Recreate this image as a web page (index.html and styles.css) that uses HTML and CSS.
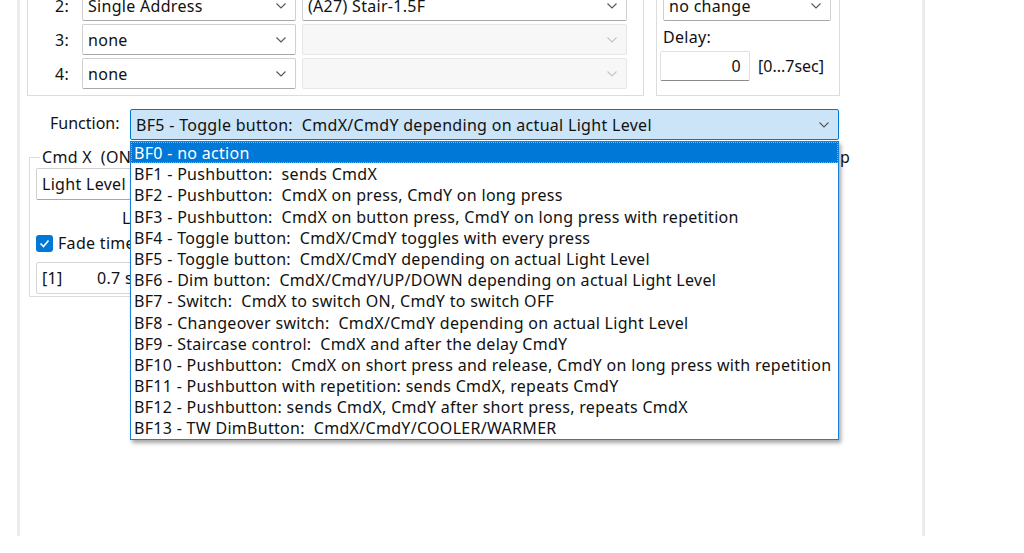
FILE: index.html
```html
<!DOCTYPE html>
<html lang="en">
<head>
  <meta charset="UTF-8" />
  <title>Button Function</title>
  <link rel="stylesheet" href="styles.css">
</head>
<body>
  <div class="window">
    <div class="top">
      <div class="group addr-group">
        <div class="addr-row">
          <span class="row-no">2:</span>
          <div class="combo combo-type"><span>Single Address</span><svg class="chev" width="10" height="6" viewBox="0 0 10 6"><path d="M0.5 0.5 L5 5 L9.5 0.5" /></svg></div>
          <div class="combo combo-target"><span>(A27) Stair-1.5F</span><svg class="chev" width="10" height="6" viewBox="0 0 10 6"><path d="M0.5 0.5 L5 5 L9.5 0.5" /></svg></div>
        </div>
        <div class="addr-row">
          <span class="row-no">3:</span>
          <div class="combo combo-type"><span>none</span><svg class="chev" width="10" height="6" viewBox="0 0 10 6"><path d="M0.5 0.5 L5 5 L9.5 0.5" /></svg></div>
          <div class="combo combo-target disabled"><span></span><svg class="chev" width="10" height="6" viewBox="0 0 10 6"><path d="M0.5 0.5 L5 5 L9.5 0.5" /></svg></div>
        </div>
        <div class="addr-row">
          <span class="row-no">4:</span>
          <div class="combo combo-type"><span>none</span><svg class="chev" width="10" height="6" viewBox="0 0 10 6"><path d="M0.5 0.5 L5 5 L9.5 0.5" /></svg></div>
          <div class="combo combo-target disabled"><span></span><svg class="chev" width="10" height="6" viewBox="0 0 10 6"><path d="M0.5 0.5 L5 5 L9.5 0.5" /></svg></div>
        </div>
      </div>

      <div class="group opt-group">
        <div class="combo combo-opt"><span>no change</span><svg class="chev" width="10" height="6" viewBox="0 0 10 6"><path d="M0.5 0.5 L5 5 L9.5 0.5" /></svg></div>
        <div class="delay-label">Delay:</div>
        <div class="delay-row">
          <div class="num-input">0</div>
          <span class="range">[0...7sec]</span>
        </div>
      </div>
    </div>

    <div class="function-row">
      <span class="function-label">Function:</span>
      <div class="function-select">
        <div class="combo combo-active"><span>BF5 - Toggle button:  CmdX/CmdY depending on actual Light Level</span><svg class="chev" width="10" height="6" viewBox="0 0 10 6"><path d="M0.5 0.5 L5 5 L9.5 0.5" /></svg></div>
        <ul class="dropdown">
          <li class="selected">BF0 - no action</li>
          <li>BF1 - Pushbutton:  sends CmdX</li>
          <li>BF2 - Pushbutton:  CmdX on press, CmdY on long press</li>
          <li>BF3 - Pushbutton:  CmdX on button press, CmdY on long press with repetition</li>
          <li>BF4 - Toggle button:  CmdX/CmdY toggles with every press</li>
          <li>BF5 - Toggle button:  CmdX/CmdY depending on actual Light Level</li>
          <li>BF6 - Dim button:  CmdX/CmdY/UP/DOWN depending on actual Light Level</li>
          <li>BF7 - Switch:  CmdX to switch ON, CmdY to switch OFF</li>
          <li>BF8 - Changeover switch:  CmdX/CmdY depending on actual Light Level</li>
          <li>BF9 - Staircase control:  CmdX and after the delay CmdY</li>
          <li>BF10 - Pushbutton:  CmdX on short press and release, CmdY on long press with repetition</li>
          <li>BF11 - Pushbutton with repetition: sends CmdX, repeats CmdY</li>
          <li>BF12 - Pushbutton: sends CmdX, CmdY after short press, repeats CmdX</li>
          <li>BF13 - TW DimButton:  CmdX/CmdY/COOLER/WARMER</li>
        </ul>
      </div>
    </div>

    <div class="mid">
      <fieldset class="cmd-group cmd-x">
        <legend>Cmd X  (ON / Dim Up)</legend>
        <div class="combo combo-level"><span>Light Level</span><svg class="chev" width="10" height="6" viewBox="0 0 10 6"><path d="M0.5 0.5 L5 5 L9.5 0.5" /></svg></div>
        <div class="level-label">Level:</div>
        <label class="check-row">
          <span class="checkbox"><svg width="13" height="13" viewBox="0 0 13 13"><path d="M2.5 6.5 L5.5 9.5 L10.5 3.5" /></svg></span>
          <span>Fade time</span>
        </label>
        <div class="fade-box"><span class="fade-idx">[1]</span><span>0.7 sec</span></div>
      </fieldset>
      <fieldset class="cmd-group cmd-y">
        <legend>Cmd Y  (OFF / Dim Down)</legend>
      </fieldset>
      <span class="side-label">Up</span>
    </div>
  </div>
</body>
</html>
```

FILE: styles.css
```css
* { box-sizing: border-box; }

body {
  margin: 0;
  background: #fff;
  font-family: 'Noto Sans', 'Noto Sans CJK KR', sans-serif;
  font-size: 16px;
  letter-spacing: 0.3px;
  color: #111;
  overflow: hidden;
}

.window {
  margin-left: 17px;
  width: 908px;
  height: 100vh;
  border-left: 3px solid #ebebeb;
  border-right: 3px solid #ebebeb;
}

/* top groups */
.top {
  display: flex;
  gap: 12px;
  margin-top: -17px;
  margin-left: 7px;
}

.group {
  border: 1px solid #dcdcdc;
}

.addr-group {
  width: 617px;
  padding: 6px 16px 5px 0;
}

.addr-row {
  display: flex;
  align-items: center;
  gap: 6px;
  margin-bottom: 3px;
}

.addr-row:last-child { margin-bottom: 0; }

.row-no {
  width: 48px;
  padding-right: 7px;
  text-align: right;
}

.combo {
  display: flex;
  align-items: center;
  justify-content: space-between;
  height: 31px;
  padding: 0 9px 0 5px;
  background: #fff;
  border: 1px solid #d0d0d0;
  border-bottom-color: #a8a8a8;
  border-radius: 2px;
  white-space: pre;
}

.chev { flex: none; }
.chev path { fill: none; stroke: #555; stroke-width: 1.1; }

.combo-type { width: 214px; }
.combo-target { width: 325px; }

.combo.disabled {
  background: #f7f7f7;
  border-color: #e6e6e6;
}
.combo.disabled .chev path { stroke: #c4c4c4; }

.opt-group {
  width: 184px;
  padding: 6px 7px 14px 6px;
}

.combo-opt { width: 168px; }

.delay-label {
  margin-top: 6px;
  line-height: 20px;
}

.delay-row {
  display: flex;
  align-items: center;
  gap: 8px;
  margin-top: 4px;
  margin-left: -3px;
}

.num-input {
  width: 90px;
  height: 30px;
  padding: 3px 8px 0 0;
  text-align: right;
  border: 1px solid #e0e0e0;
  border-bottom-color: #8a8a8a;
  border-radius: 2px;
}

.range { letter-spacing: 0; }

/* function select */
.function-row {
  display: flex;
  align-items: center;
  margin: 13px 0 0 30px;
}

.function-label {
  width: 80px;
  margin-top: -4px;
  letter-spacing: 0;
}

.function-select {
  position: relative;
  width: 709px;
}

.combo-active {
  background: #cce4f7;
  border: 1px solid #0078d7;
}

.dropdown {
  position: absolute;
  top: calc(100% + 1px);
  left: 0;
  width: 709px;
  margin: 0;
  padding: 0;
  list-style: none;
  background: #fff;
  border: 1px solid #1a7fd8;
  box-shadow: 2px 3px 4px rgba(0, 0, 0, 0.35);
  z-index: 2;
}

.dropdown li {
  height: 21.2px;
  line-height: 22px;
  padding-left: 3px;
  white-space: pre;
}

.dropdown li.selected {
  background: #0078d7;
  color: #fff;
  outline: 1px dotted #e8a040;
  outline-offset: -1px;
}

/* lower groups */
.mid {
  display: flex;
  align-items: flex-start;
  margin-top: 7px;
}

.cmd-group {
  margin: 0;
  padding: 0 6px 2px;
  border: 1px solid #dcdcdc;
  min-inline-size: 0;
}

.cmd-group legend {
  margin-left: 4px;
  padding: 0 2px;
  line-height: 20px;
  white-space: pre;
}

.cmd-x {
  width: 390px;
  margin-left: 9px;
}

.cmd-y {
  width: 396px;
  height: 150px;
  margin-left: 10px;
}

.combo-level {
  width: 300px;
  height: 32px;
  margin-top: 1px;
}

.level-label {
  margin-top: 8px;
  padding-left: 86px;
  line-height: 20px;
}

.check-row {
  display: flex;
  align-items: center;
  gap: 5px;
  margin-top: 5px;
  line-height: 20px;
}

.checkbox {
  display: flex;
  align-items: center;
  justify-content: center;
  width: 17px;
  height: 17px;
  background: #0078d7;
  border-radius: 3px;
}

.checkbox path { fill: none; stroke: #fff; stroke-width: 1.6; }

.fade-box {
  display: flex;
  align-items: center;
  width: 300px;
  height: 32px;
  margin-top: 9px;
  padding-left: 5px;
  border: 1px solid #d6d6d6;
  border-radius: 2px;
}

.fade-idx { width: 55px; }

.side-label {
  margin-left: 3px;
  line-height: 20px;
}
```
